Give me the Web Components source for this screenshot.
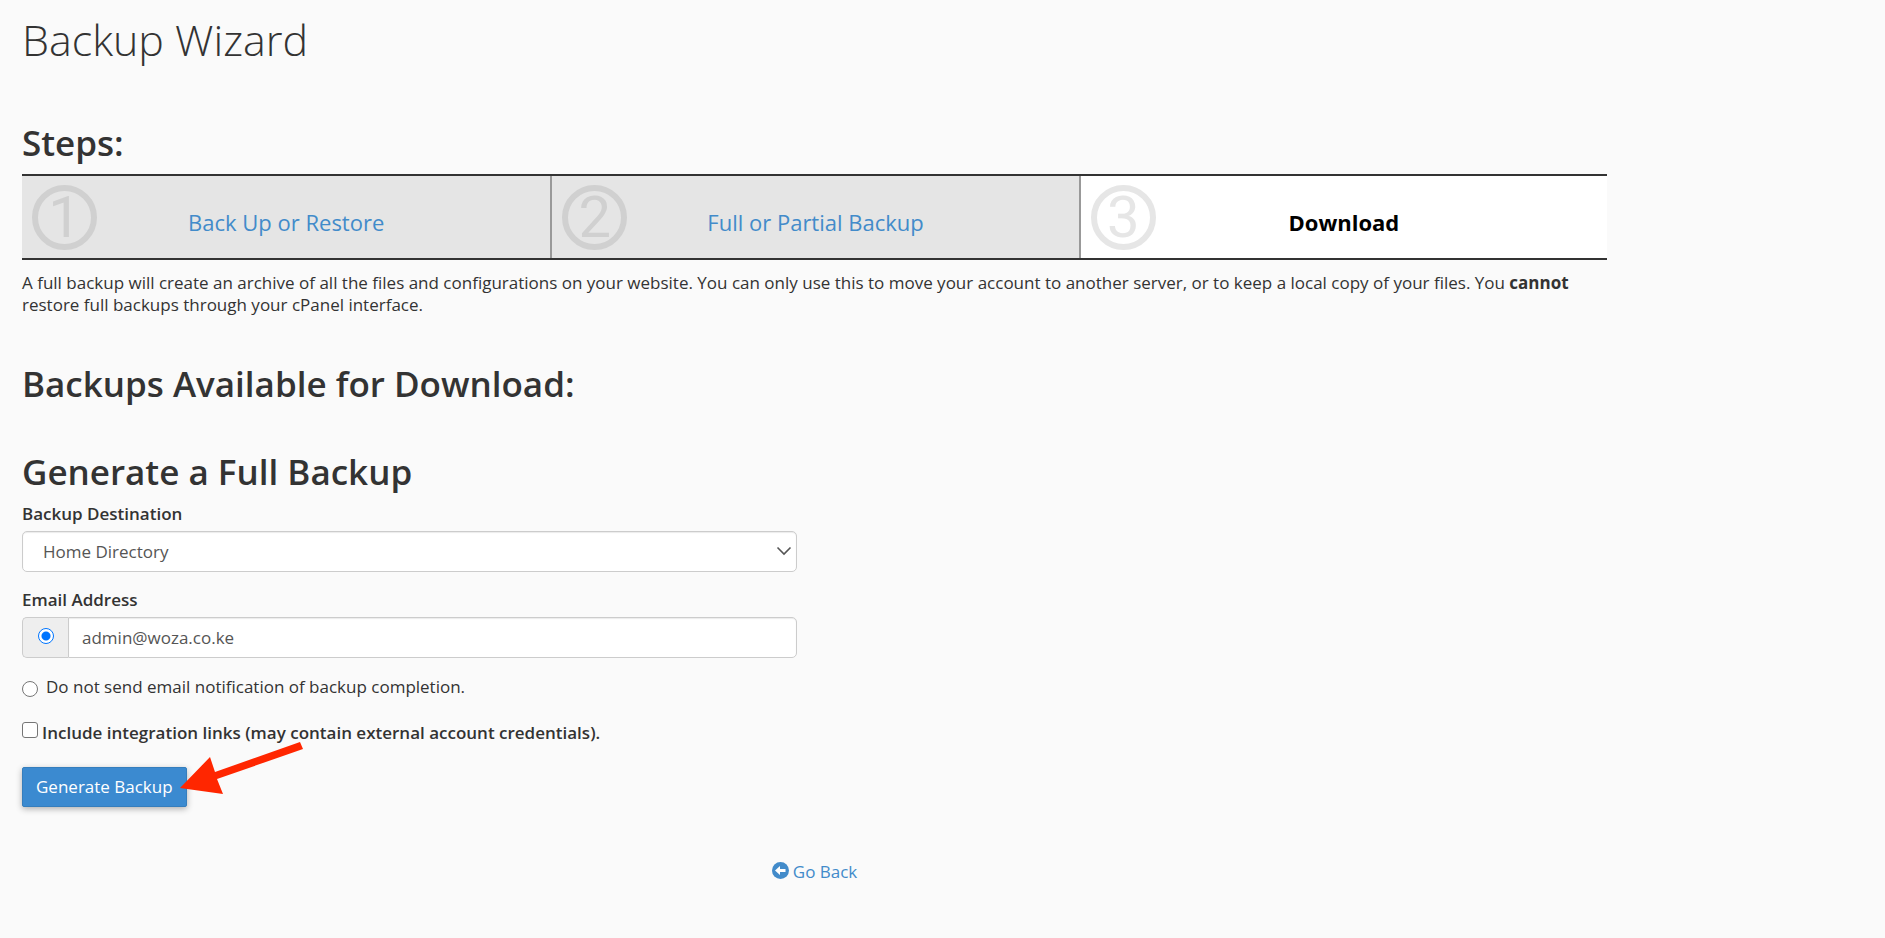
<!DOCTYPE html>
<html lang="en">
<head>
<meta charset="utf-8">
<title>Backup Wizard</title>
<style>
  body {
    margin: 0;
    padding: 16px 22px;
    background: #fafafa;
    color: #333;
    font: 17px/22px "Open Sans", sans-serif;
  }
</style>
</head>
<body>
<backup-wizard></backup-wizard>

<template id="wizard-template">
  <style>
    :host { display: block; width: 86.1%; }
    h1, h2, p { margin: 0; }
    h1 { font-size: 43px; line-height: 48px; font-weight: 300; margin-bottom: 59px; }
    h2 { font-size: 35px; line-height: 40px; font-weight: 600; margin-bottom: 11px; }
    p { margin: 12px 0 48px; }
    strong { font-weight: 700; }
    h2.available { margin-bottom: 48px; }
    nav { display: grid; grid-template-columns: repeat(3, 1fr); border: solid #333; border-width: 2px 0; }
    footer { display: flex; justify-content: center; margin-top: 54px; }
  </style>
  <h1>Backup Wizard</h1>
  <h2>Steps:</h2>
  <nav aria-label="Steps">
    <wizard-step number="1" href="#backup-or-restore">Back Up or Restore</wizard-step>
    <wizard-step number="2" href="#full-or-partial">Full or Partial Backup</wizard-step>
    <wizard-step number="3" current>Download</wizard-step>
  </nav>
  <p>A full backup will create an archive of all the files and configurations on your website. You can only use this to move your account to another server, or to keep a local copy of your files. You <strong>cannot</strong> restore full backups through your cPanel interface.</p>
  <h2 class="available">Backups Available for Download:</h2>
  <h2>Generate a Full Backup</h2>
  <backup-form></backup-form>
  <footer><back-link href="#back">Go Back</back-link></footer>
</template>

<template id="step-template">
  <style>
    :host {
      display: grid;
      align-items: center;
      height: 82px;
      background: #e5e5e5;
      font-size: 22px;
      line-height: 30px;
      border-left: 2px solid #999;
    }
    :host(:first-child) { border-left: 0; }
    :host([current]) { background: #fff; color: #000; font-weight: 700; }
    .number, .label { grid-area: 1 / 1; }
    .number {
      box-sizing: border-box;
      width: 65px;
      height: 65px;
      margin-left: 10px;
      border: 6px solid #d0d0d0;
      border-radius: 50%;
      color: #d0d0d0;
      font: 58px/53px Roboto, sans-serif;
      text-align: center;
    }
    :host([current]) .number { border-color: #e6e6e6; color: #e6e6e6; }
    .label { justify-self: center; padding-top: 10px; }
    a { color: #428bca; text-decoration: none; }
  </style>
  <span class="number"></span>
  <span class="label"><slot></slot></span>
</template>

<template id="form-template">
  <style>
    :host { display: block; width: calc(50% - 18px); }
    form { margin: 0; }
    label { display: block; }
    .caption, .links { font-weight: 600; }
    .caption { margin-bottom: 6px; }
    select, input, button { font: inherit; margin: 0; }
    .field {
      box-sizing: border-box;
      display: block;
      width: 100%;
      height: 41px;
      border: 1px solid #ccc;
      border-radius: 5px;
      background: #fff;
      color: #555;
      box-shadow: inset 0 1px 1px rgba(0, 0, 0, .08);
    }
    .select { position: relative; margin-bottom: 17px; }
    select { appearance: none; padding: 0 40px 0 20px; }
    .select svg { position: absolute; right: 5px; top: 15px; pointer-events: none; }
    .group { display: flex; margin-bottom: 18px; }
    .addon {
      box-sizing: border-box;
      display: flex;
      justify-content: center;
      width: 46px;
      padding-top: 10px;
      border: 1px solid #ccc;
      border-right: 0;
      border-radius: 5px 0 0 5px;
      background: #eee;
    }
    .group .field { flex: 1; min-width: 0; width: auto; border-radius: 0 5px 5px 0; padding: 0 13px; }
    input[type="radio"], input[type="checkbox"] {
      appearance: none;
      box-sizing: border-box;
      flex: none;
      width: 16px;
      height: 16px;
      border: 1px solid #767676;
      background: #fff;
    }
    input[type="radio"] { border-radius: 50%; }
    input[type="radio"]:checked {
      border-color: #0075ff;
      background: radial-gradient(circle, #0075ff 4px, #fff 5px);
    }
    input[type="checkbox"] { border-radius: 3px; }
    .option { display: flex; }
    .quiet { align-items: center; gap: 8px; margin-bottom: 24px; }
    .quiet input { margin-top: 4px; }
    .links { gap: 4px; margin-bottom: 23px; }
    .actions { position: relative; display: flex; }
    button {
      height: 40px;
      padding: 0 13px;
      border: 1px solid #357ebd;
      border-radius: 2px;
      background: #3b8ad0;
      color: #fff;
      box-shadow: 0 2px 6px rgba(0, 0, 0, .3);
    }
    .arrow { position: absolute; left: 158px; top: -25px; pointer-events: none; }
  </style>
  <form>
    <label class="caption" for="destination">Backup Destination</label>
    <div class="select">
      <select class="field" id="destination"><option>Home Directory</option></select>
      <svg width="16" height="10" viewBox="0 0 16 10" fill="none" stroke="#555" stroke-width="1.600" aria-hidden="true"><path d="M1.500 1.500L8 8l6.500-6.500"/></svg>
    </div>
    <label class="caption" for="email">Email Address</label>
    <div class="group">
      <span class="addon"><input type="radio" name="notify" aria-label="Send email notification" checked></span>
      <input class="field" type="text" id="email" value="admin@woza.co.ke">
    </div>
    <label class="option quiet" for="quiet"><input type="radio" name="notify" id="quiet">Do not send email notification of backup completion.</label>
    <label class="option links" for="links"><input type="checkbox" id="links">Include integration links (may contain external account credentials).</label>
    <div class="actions">
      <button type="button">Generate Backup</button>
      <svg class="arrow" width="124" height="54" viewBox="0 0 124 54" aria-hidden="true"><path fill="#ff2600" d="M0 46L30 15 35 30 120 0 123 7 37 37 43 52z"/></svg>
    </div>
  </form>
</template>

<template id="back-template">
  <style>
    :host { display: block; }
    a { display: flex; gap: 4px; color: #428bca; text-decoration: none; }
    svg { margin-top: 1px; }
  </style>
  <a><svg width="17" height="17" viewBox="0 0 17 17" aria-hidden="true"><circle cx="8.5" cy="8.5" r="8.5" fill="#428bca"/><path fill="#fff" d="M3 8.5L8 4v3h5.500v3H8v3z"/></svg><slot></slot></a>
</template>

<script>
  class TemplateElement extends HTMLElement {
    constructor() {
      super();
      const template = document.getElementById(this.constructor.template);
      this.attachShadow({ mode: "open" }).append(template.content.cloneNode(true));
    }
  }

  class WizardStep extends TemplateElement {
    static template = "step-template";
    connectedCallback() {
      this.shadowRoot.querySelector(".number").textContent = this.getAttribute("number");
      const href = this.getAttribute("href");
      const slot = this.shadowRoot.querySelector("slot");
      if (href && slot.parentNode.localName !== "a") {
        const link = document.createElement("a");
        link.href = href;
        slot.replaceWith(link);
        link.append(slot);
      }
    }
  }

  class BackupForm extends TemplateElement {
    static template = "form-template";
  }

  class BackLink extends TemplateElement {
    static template = "back-template";
    connectedCallback() {
      this.shadowRoot.querySelector("a").href = this.getAttribute("href");
    }
  }

  class BackupWizard extends TemplateElement {
    static template = "wizard-template";
  }

  customElements.define("wizard-step", WizardStep);
  customElements.define("backup-form", BackupForm);
  customElements.define("back-link", BackLink);
  customElements.define("backup-wizard", BackupWizard);
</script>
</body>
</html>
